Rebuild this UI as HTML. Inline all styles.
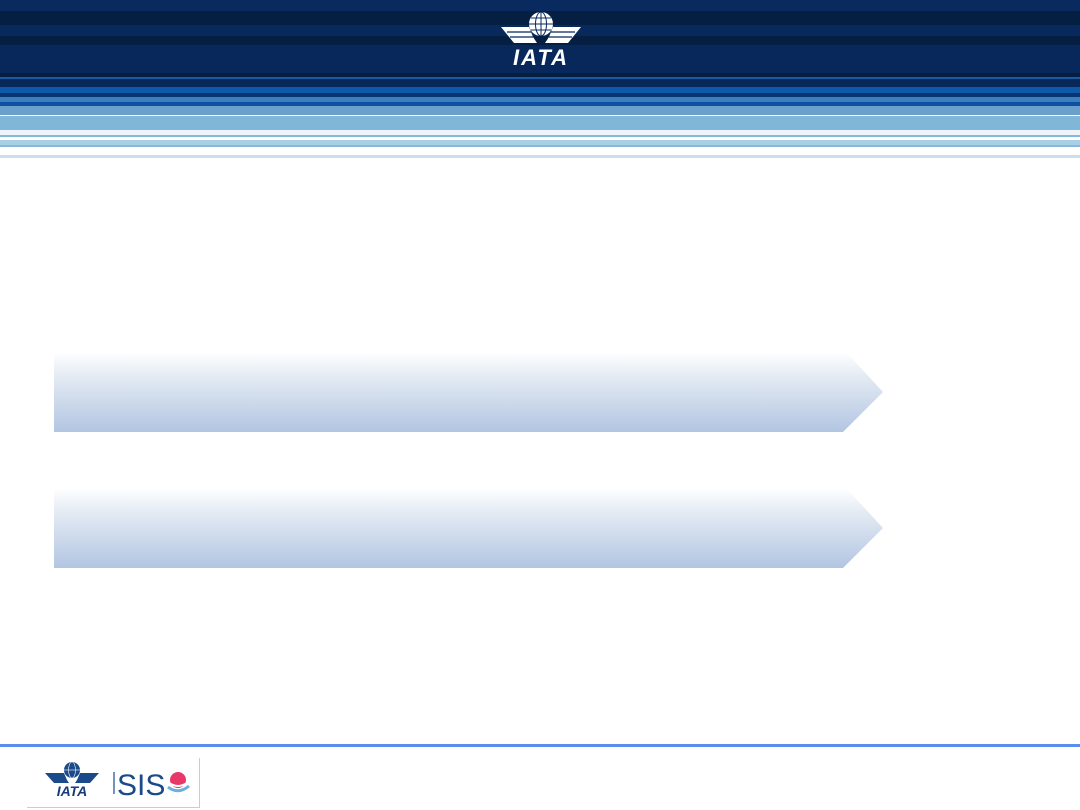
<!DOCTYPE html><html><head><style>
body{margin:0;width:1080px;height:810px;background:#fff;position:relative;overflow:hidden;font-family:"Liberation Sans",sans-serif}
.s{position:absolute;left:0;width:1080px}
.arr{position:absolute;left:54px;width:829px;height:80px;background:linear-gradient(#fff,#e4ebf4 30%,#b2c5e1);clip-path:polygon(0 0,792px 0,829px 40px,789px 80px,0 80px)}
</style></head><body>
<div class="s" style="top:0;height:11px;background:#082a5e"></div>
<div class="s" style="top:11px;height:14px;background:#051f42"></div>
<div class="s" style="top:25px;height:11px;background:#08295c"></div>
<div class="s" style="top:36px;height:9px;background:#051f42"></div>
<div class="s" style="top:45px;height:28px;background:#08285c"></div>
<div class="s" style="top:73px;height:4px;background:#051f42"></div>
<div class="s" style="top:77px;height:2px;background:#1a5aa0"></div>
<div class="s" style="top:79px;height:8px;background:#08285c"></div>
<div class="s" style="top:87px;height:6px;background:#0e5aaa"></div>
<div class="s" style="top:93px;height:4px;background:#0a3470"></div>
<div class="s" style="top:97px;height:5px;background:#3a80bd"></div>
<div class="s" style="top:102px;height:4px;background:#1050a0"></div>
<div class="s" style="top:106px;height:9px;background:#6aa0cc"></div>
<div class="s" style="top:116px;height:14px;background:#80b6d8"></div>
<div class="s" style="top:130px;height:5px;background:#eef5fa"></div>
<div class="s" style="top:135px;height:2px;background:#8ab8dc"></div>
<div class="s" style="top:140px;height:5px;background:#a8d0e6"></div>
<div class="s" style="top:145px;height:2px;background:#8ab8dc"></div>
<div class="s" style="top:155px;height:3px;background:#c8e0ee"></div>
<svg style="position:absolute;left:500px;top:8px" width="82" height="60" viewBox="0 0 82 60">
<circle cx="41" cy="16" r="12" fill="#fff"/>
<g stroke="#08285c" stroke-width="1" fill="none"><ellipse cx="41" cy="16" rx="5.5" ry="12"/><line x1="41" y1="4" x2="41" y2="28"/><line x1="29" y1="16" x2="53" y2="16"/><line x1="31" y1="10" x2="51" y2="10"/><line x1="31" y1="22" x2="51" y2="22"/></g>
<path d="M1 19 L29 19 L33 29 L37 35 L14 35 Z M81 19 L53 19 L49 29 L45 35 L68 35 Z" fill="#fff"/>
<g stroke="#08285c" stroke-width="1.2"><line x1="7" y1="24" x2="31" y2="24"/><line x1="10" y1="29" x2="33" y2="29"/><line x1="75" y1="24" x2="51" y2="24"/><line x1="72" y1="29" x2="49" y2="29"/></g>
<text x="41" y="57" text-anchor="middle" fill="#fff" font-size="22" font-weight="bold" font-style="italic" letter-spacing="2">IATA</text>
</svg>
<div class="arr" style="top:352px"></div>
<div class="arr" style="top:488px"></div>
<div class="s" style="top:744px;height:3px;background:#5b8fef"></div>
<div style="position:absolute;left:27px;top:758px;width:172px;height:49px;border-right:1px solid #ccc;border-bottom:1px solid #ccc"></div>
<svg style="position:absolute;left:44px;top:760px" width="150" height="40" viewBox="0 0 150 40">
<circle cx="28" cy="10" r="8" fill="#1a4a8a"/>
<g stroke="#fff" stroke-width="0.6" fill="none"><ellipse cx="28" cy="10" rx="3.5" ry="8"/><line x1="20" y1="10" x2="36" y2="10"/></g>
<path d="M1 13 L20 13 L23 20 L25 23 L10 23 Z M55 13 L36 13 L33 20 L31 23 L46 23 Z" fill="#1a4a8a"/>
<text x="28" y="36" text-anchor="middle" fill="#1a3a7a" font-size="14" font-weight="bold" font-style="italic">IATA</text>
<line x1="70" y1="12" x2="70" y2="34" stroke="#1a4a8a" stroke-width="1.2"/>
<text x="73" y="35" fill="#1a4a8a" font-size="30">SIS</text>
<circle cx="134" cy="20" r="8" fill="#e8386a"/><path d="M124 22 Q134 30 144 22" stroke="#fff" stroke-width="2" fill="none"/><path d="M124 27 Q134 35 145 26" stroke="#6ab0e0" stroke-width="3" fill="none"/>
</svg>
</body></html>
